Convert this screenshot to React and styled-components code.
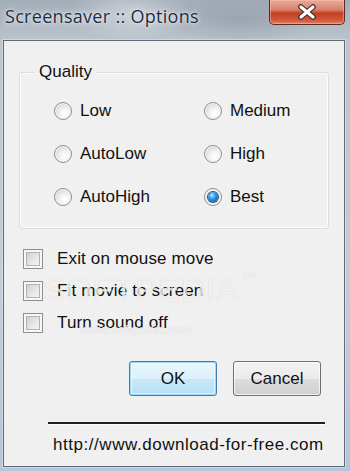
import React from "react";
import styled, { createGlobalStyle, css } from "styled-components";

const GlobalStyle = createGlobalStyle`
  html, body {
    margin: 0;
    padding: 0;
  }
  body {
    width: 350px;
    height: 471px;
    overflow: hidden;
    font-family: "Liberation Sans", Arial, sans-serif;
  }
`;

const Window = styled.div`
  width: 350px;
  height: 471px;
  box-sizing: border-box;
  display: flex;
  flex-direction: column;
  overflow: hidden;
  background:
    radial-gradient(ellipse 60px 30px at 130px 12px, rgba(255, 255, 255, 0.35), transparent),
    radial-gradient(ellipse 80px 25px at 240px 20px, rgba(120, 130, 140, 0.35), transparent),
    linear-gradient(180deg, #a3adb8 0%, #bcc5ce 9%, #c3ccd5 60%, #b3c6da 100%);
`;

const TitleBar = styled.div`
  height: 40px;
  display: flex;
  align-items: flex-start;
`;

const Title = styled.div`
  padding: 6px 0 0 5px;
  font-family: "Open Sans", "Noto Sans", sans-serif;
  font-size: 18px;
  letter-spacing: 0.3px;
  line-height: 20px;
  color: #1d2b44;
  text-shadow: 0 0 6px rgba(255, 255, 255, 0.9), 0 0 2px rgba(255, 255, 255, 0.8);
`;

const CloseButton = styled.div`
  margin-left: auto;
  margin-right: 5px;
  width: 76px;
  height: 25px;
  box-sizing: border-box;
  border: 1px solid #5b2c24;
  border-top: none;
  border-radius: 0 0 5px 5px;
  background: linear-gradient(180deg, #e8aa9a 0%, #d9826e 40%, #c43e23 55%, #d3593d 85%, #e0856a 100%);
  box-shadow: inset 0 0 0 1px rgba(255, 200, 180, 0.45);
  display: flex;
  align-items: center;
  justify-content: center;
`;

const Client = styled.div`
  margin-left: 3px;
  width: 342px;
  height: 427px;
  box-sizing: border-box;
  border: 1px solid #626b75;
  box-shadow: 0 0 0 1px rgba(255, 255, 255, 0.35);
  background: #f0f0f0;
  display: flex;
  flex-direction: column;
  position: relative;
  overflow: hidden;
  font-size: 17px;
  color: #111;
`;

const GroupBox = styled.div`
  position: relative;
  margin: 31px 0 0 15px;
  width: 310px;
  height: 157px;
  box-sizing: border-box;
  border: 1px solid #d5dfe5;
  border-radius: 3px;
  box-shadow: inset 0 0 0 1px #fbfbfb;
`;

const Legend = styled.span`
  position: absolute;
  top: -11px;
  left: 15px;
  padding: 0 4px;
  background: #f0f0f0;
  line-height: 20px;
`;

const RadioGrid = styled.div`
  display: grid;
  grid-template-columns: 150px 1fr;
  grid-auto-rows: 43px;
  padding: 16px 0 0 34px;
`;

const Option = styled.label`
  display: flex;
  align-items: center;
  gap: 8px;
`;

const RadioDot = styled.span`
  width: 18px;
  height: 18px;
  box-sizing: border-box;
  border-radius: 50%;
  border: 1px solid #8e8f8f;
  background: radial-gradient(circle at 62% 66%, #ffffff 0%, #f3f3f3 35%, #d2d4d8 80%);
  box-shadow: inset 0 0 0 1px #f7f7f7;
  display: flex;
  align-items: center;
  justify-content: center;
  ${(p) =>
    p.$checked &&
    css`
      background: #f4f4f4;
      &::after {
        content: "";
        width: 10px;
        height: 10px;
        border-radius: 50%;
        background: radial-gradient(circle at 40% 35%, #bfe8ff 0%, #2d97e6 40%, #0a5aa8 85%);
        box-shadow: 0 0 0 1px #1c4f7e;
      }
    `}
`;

const CheckList = styled.div`
  margin: 14px 0 0 19px;
  display: flex;
  flex-direction: column;
`;

const CheckRow = styled.label`
  height: 32px;
  display: flex;
  align-items: center;
  gap: 14px;
  letter-spacing: 0.15px;
`;

const CheckBox = styled.span`
  width: 20px;
  height: 20px;
  box-sizing: border-box;
  border: 1px solid #8e8f8f;
  background: #f6f6f6;
  padding: 2px;
  &::after {
    content: "";
    display: block;
    width: 100%;
    height: 100%;
    box-sizing: border-box;
    border: 1px solid #b0b4b9;
    background: linear-gradient(135deg, #cbcfd5 0%, #e4e6e9 55%, #f6f6f6 100%);
  }
`;

const ButtonRow = styled.div`
  margin-top: 22px;
  display: flex;
  justify-content: flex-end;
  gap: 16px;
  padding-right: 23px;
`;

const Button = styled.button`
  width: 88px;
  height: 35px;
  box-sizing: border-box;
  border: 1px solid #707070;
  border-radius: 3px;
  background: linear-gradient(180deg, #f2f2f2 0%, #ebebeb 50%, #dddddd 51%, #cfcfcf 100%);
  box-shadow: inset 0 0 0 1px rgba(255, 255, 255, 0.7);
  font-family: inherit;
  font-size: 17px;
  color: #111;
  padding: 0;
  ${(p) =>
    p.$default &&
    css`
      border-color: #3c7fb1;
      background: linear-gradient(180deg, #eaf6fd 0%, #dcf1fc 50%, #c9e8f9 51%, #b7def5 100%);
      box-shadow: inset 0 0 0 1px #9fd6f2, inset 0 0 0 2px rgba(255, 255, 255, 0.5);
    `}
`;

const Separator = styled.div`
  margin: 26px 19px 0 44px;
  height: 2px;
  background: #202020;
  border-bottom: 1px solid #fdfdfd;
`;

const Link = styled.div`
  margin-top: 10px;
  padding-left: 49px;
  font-size: 17px;
  letter-spacing: 0.55px;
  line-height: 20px;
  color: #111;
  white-space: nowrap;
`;

const Watermark = styled.div`
  position: absolute;
  left: 39px;
  top: 230px;
  font-size: 33px;
  letter-spacing: 1px;
  color: rgba(255, 255, 255, 0.7);
  text-shadow: 0 0 1px rgba(150, 150, 150, 0.4);
  pointer-events: none;
  white-space: nowrap;
  sup {
    font-size: 8px;
    vertical-align: top;
    margin-left: 4px;
  }
`;

const WatermarkUrl = styled.div`
  position: absolute;
  left: 76px;
  top: 281px;
  font-size: 13px;
  color: rgba(255, 255, 255, 0.8);
  text-shadow: 0 0 1px rgba(150, 150, 150, 0.5);
  pointer-events: none;
`;

const qualities = [
  { label: "Low" },
  { label: "Medium" },
  { label: "AutoLow" },
  { label: "High" },
  { label: "AutoHigh" },
  { label: "Best", checked: true },
];

const options = ["Exit on mouse move", "Fit movie to screen", "Turn sound off"];

export default function App() {
  return (
    <>
      <GlobalStyle />
      <Window>
        <TitleBar>
          <Title>Screensaver :: Options</Title>
          <CloseButton>
            <svg width="20" height="16" viewBox="0 0 20 16">
              <path d="M4 3 L16 13 M16 3 L4 13" stroke="#3a2a2a" strokeWidth="5.5" strokeLinecap="round" />
              <path d="M4 3 L16 13 M16 3 L4 13" stroke="#ffffff" strokeWidth="3.2" strokeLinecap="round" />
            </svg>
          </CloseButton>
        </TitleBar>
        <Client>
          <GroupBox>
            <Legend>Quality</Legend>
            <RadioGrid>
              {qualities.map((q) => (
                <Option key={q.label}>
                  <RadioDot $checked={q.checked} />
                  {q.label}
                </Option>
              ))}
            </RadioGrid>
          </GroupBox>
          <CheckList>
            {options.map((o) => (
              <CheckRow key={o}>
                <CheckBox />
                {o}
              </CheckRow>
            ))}
          </CheckList>
          <ButtonRow>
            <Button $default>OK</Button>
            <Button>Cancel</Button>
          </ButtonRow>
          <Separator />
          <Link>http://www.download-for-free.com</Link>
          <Watermark>
            SOFTPEDIA<sup>TM</sup>
          </Watermark>
          <WatermarkUrl>www.softpedia.com</WatermarkUrl>
        </Client>
      </Window>
    </>
  );
}
